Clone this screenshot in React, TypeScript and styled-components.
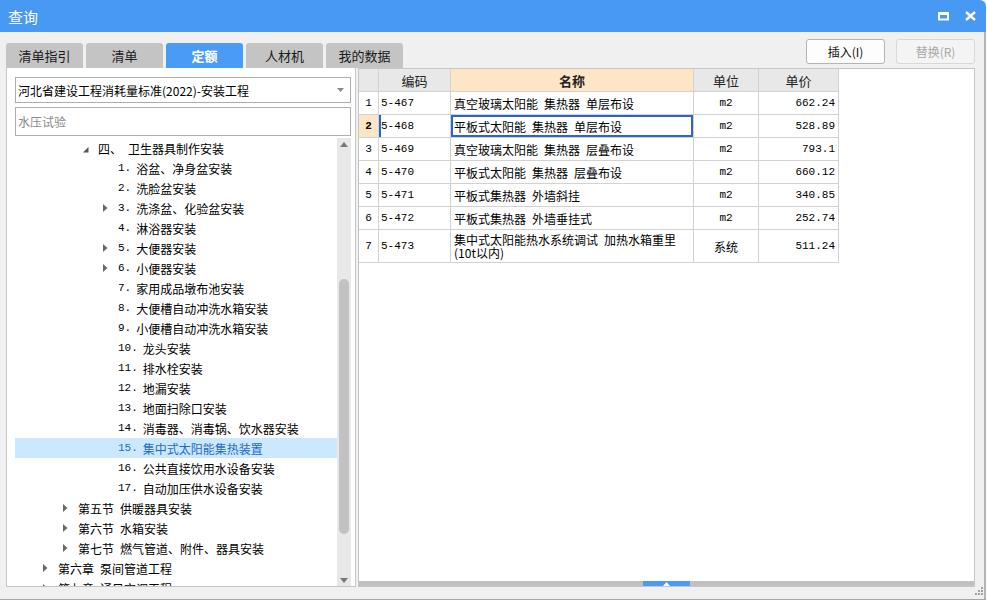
import styled, { createGlobalStyle } from "styled-components";

const GlobalStyle = createGlobalStyle`
  html, body {
    margin: 0;
    padding: 0;
    background: #fff;
  }
  body {
    font-family: "Noto Sans CJK SC", "Noto Sans", sans-serif;
    font-size: 12px;
    color: #000;
  }
  * { box-sizing: border-box; }
`;

const mono = `"Liberation Mono", "DejaVu Sans Mono", monospace`;

const Window = styled.div`
  width: 986px;
  height: 600px;
  display: flex;
  flex-direction: column;
  border-bottom: 1px solid #a6a6a6;
  position: relative;
`;

const TitleBar = styled.div`
  height: 32px;
  flex: none;
  background: #4799f4;
  color: #fff;
  display: flex;
  align-items: center;
  justify-content: space-between;
  padding: 0 10px 0 8px;
  border-top-right-radius: 6px;
  font-size: 15px;
`;

const Controls = styled.div`
  display: flex;
  align-items: center;
  gap: 16px;
`;

const Body = styled.div`
  flex: 1;
  background: #f0f0f0;
  border-right: 2px solid #b4b4b4;
  padding: 0 9px 0 6px;
  display: flex;
  flex-direction: column;
`;

const TopRow = styled.div`
  height: 36px;
  flex: none;
  display: flex;
  justify-content: space-between;
`;

const Tabs = styled.div`
  display: flex;
  gap: 3px;
  align-self: flex-end;
`;

const Tab = styled.div<{ $active?: boolean }>`
  width: 77px;
  height: 25px;
  border-radius: 3px 3px 0 0;
  background: ${(p) => (p.$active ? "#4a9bf4" : "#c4c4c4")};
  color: ${(p) => (p.$active ? "#fff" : "#1a1a1a")};
  font-weight: ${(p) => (p.$active ? "bold" : "normal")};
  font-size: 13px;
  display: flex;
  align-items: center;
  justify-content: center;
`;

const Buttons = styled.div`
  display: flex;
  gap: 11px;
  margin-top: 7px;
`;

const Button = styled.div<{ $disabled?: boolean }>`
  width: 79px;
  height: 25px;
  border: 1px solid ${(p) => (p.$disabled ? "#d8d8d8" : "#b4b4b4")};
  border-radius: 3px;
  background: ${(p) => (p.$disabled ? "#f4f4f4" : "#fdfdfd")};
  color: ${(p) => (p.$disabled ? "#a8a8a8" : "#111")};
  display: flex;
  align-items: center;
  justify-content: center;
`;

const Content = styled.div`
  height: 519px;
  flex: none;
  display: flex;
  gap: 2px;
`;

const LeftPanel = styled.div`
  width: 350px;
  flex: none;
  background: #fff;
  border: 1px solid #c6c6c6;
  border-top: none;
  padding: 9px 4px 0 8px;
  display: flex;
  flex-direction: column;
`;

const Select = styled.div`
  height: 26px;
  flex: none;
  border: 1px solid #adadad;
  display: flex;
  align-items: center;
  justify-content: space-between;
  padding: 0 6px 0 2px;
  white-space: nowrap;
`;

const SearchInput = styled.input`
  height: 29px;
  flex: none;
  margin-top: 4px;
  border: 1px solid #adadad;
  padding: 0 2px;
  font-family: "Noto Sans CJK SC", "Noto Sans", sans-serif;
  font-size: 12px;
  outline: none;
  &::placeholder {
    color: #8a8a8a;
  }
`;

const Tree = styled.div`
  flex: 1;
  margin-top: 2px;
  display: flex;
  overflow: hidden;
`;

const TreeRows = styled.div`
  flex: 1;
  overflow: hidden;
`;

const TreeRow = styled.div<{ $level: number; $selected?: boolean }>`
  height: 20px;
  display: flex;
  align-items: center;
  padding-left: ${(p) => 28 + p.$level * 20}px;
  background: ${(p) => (p.$selected ? "#cce8ff" : "transparent")};
  color: ${(p) => (p.$selected ? "#1c6cc6" : "#000")};
  white-space: nowrap;
`;

const Toggle = styled.span`
  width: 15px;
  flex: none;
  display: flex;
  align-items: center;
`;

const Num = styled.span`
  font-family: ${mono};
  font-size: 11px;
  margin-right: 5px;
`;

const Lead = styled.span`
  margin-right: 6px;
`;

const VScroll = styled.div`
  width: 14px;
  flex: none;
  background: #e8e8e8;
  display: flex;
  flex-direction: column;
  align-items: center;
  justify-content: space-between;
  padding: 4px 0 3px;
  position: relative;
`;

const VThumb = styled.div`
  position: absolute;
  left: 2px;
  top: 141px;
  width: 10px;
  height: 255px;
  border-radius: 5px;
  background: #c2c2c2;
`;

const GridPanel = styled.div`
  flex: 1;
  background: #fff;
  border: 1px solid #c6c6c6;
  display: flex;
  flex-direction: column;
  justify-content: space-between;
`;

const Table = styled.div`
  display: grid;
  grid-template-columns: 20px 72px 243px 65px 80px;
  width: 480px;
`;

const Cell = styled.div<{
  $align?: "left" | "center" | "right";
  $bg?: string;
  $mono?: boolean;
  $bold?: boolean;
  $tall?: boolean;
}>`
  height: ${(p) => (p.$tall ? 33 : 23)}px;
  border-right: 1px solid #d2d2d2;
  border-bottom: 1px solid #d2d2d2;
  background: ${(p) => p.$bg || "#fff"};
  display: flex;
  align-items: center;
  justify-content: ${(p) =>
    p.$align === "center" ? "center" : p.$align === "right" ? "flex-end" : "flex-start"};
  padding: 0 3px;
  font-family: ${(p) => (p.$mono ? mono : `"Noto Sans CJK SC", "Noto Sans", sans-serif`)};
  font-size: ${(p) => (p.$mono ? 11 : 12)}px;
  font-weight: ${(p) => (p.$bold ? "bold" : "normal")};
  white-space: nowrap;
`;

const HeadCell = styled(Cell)`
  background: ${(p) => p.$bg || "#e8e8e8"};
  color: #222;
  font-size: 13px;
`;

const CodeCell = styled(Cell)<{ $marked?: boolean }>`
  padding-left: 2px;
  box-shadow: ${(p) => (p.$marked ? "inset 2px 0 0 #2468c8" : "none")};
`;

const NameCell = styled(Cell)<{ $current?: boolean }>`
  box-shadow: ${(p) => (p.$current ? "inset 0 0 0 2px #2a66c8" : "none")};
`;

const NameText = styled.div`
  white-space: normal;
  line-height: 13px;
`;

const HBar = styled.div`
  height: 5px;
  background: #c0c0c0;
  position: relative;
`;

const HThumb = styled.div`
  position: absolute;
  left: 284px;
  top: 0;
  width: 47px;
  height: 5px;
  background: #4a9bf4;
  display: flex;
  justify-content: center;
  align-items: center;
`;

const Grip = styled.svg`
  position: absolute;
  right: 3px;
  bottom: 4px;
`;

type Node = {
  level: number;
  toggle?: "open" | "closed";
  num?: string;
  lead?: string;
  text: string;
  selected?: boolean;
};

const tree: Node[] = [
  { level: 2, toggle: "open", lead: "四、", text: "卫生器具制作安装" },
  { level: 3, num: "1.", text: "浴盆、净身盆安装" },
  { level: 3, num: "2.", text: "洗脸盆安装" },
  { level: 3, toggle: "closed", num: "3.", text: "洗涤盆、化验盆安装" },
  { level: 3, num: "4.", text: "淋浴器安装" },
  { level: 3, toggle: "closed", num: "5.", text: "大便器安装" },
  { level: 3, toggle: "closed", num: "6.", text: "小便器安装" },
  { level: 3, num: "7.", text: "家用成品墩布池安装" },
  { level: 3, num: "8.", text: "大便槽自动冲洗水箱安装" },
  { level: 3, num: "9.", text: "小便槽自动冲洗水箱安装" },
  { level: 3, num: "10.", text: "龙头安装" },
  { level: 3, num: "11.", text: "排水栓安装" },
  { level: 3, num: "12.", text: "地漏安装" },
  { level: 3, num: "13.", text: "地面扫除口安装" },
  { level: 3, num: "14.", text: "消毒器、消毒锅、饮水器安装" },
  { level: 3, num: "15.", text: "集中式太阳能集热装置", selected: true },
  { level: 3, num: "16.", text: "公共直接饮用水设备安装" },
  { level: 3, num: "17.", text: "自动加压供水设备安装" },
  { level: 1, toggle: "closed", lead: "第五节", text: "供暖器具安装" },
  { level: 1, toggle: "closed", lead: "第六节", text: "水箱安装" },
  { level: 1, toggle: "closed", lead: "第七节", text: "燃气管道、附件、器具安装" },
  { level: 0, toggle: "closed", lead: "第六章", text: "泵间管道工程" },
  { level: 0, toggle: "closed", lead: "第七章", text: "通风空调工程" },
];

// en spaces (\u2002) stand in for the half-width gaps of the original font
const rows = [
  { n: "1", code: "5-467", name: "真空玻璃太阳能\u2002集热器\u2002单层布设", unit: "m2", price: "662.24" },
  { n: "2", code: "5-468", name: "平板式太阳能\u2002集热器\u2002单层布设", unit: "m2", price: "528.89", current: true },
  { n: "3", code: "5-469", name: "真空玻璃太阳能\u2002集热器\u2002层叠布设", unit: "m2", price: "793.1" },
  { n: "4", code: "5-470", name: "平板式太阳能\u2002集热器\u2002层叠布设", unit: "m2", price: "660.12" },
  { n: "5", code: "5-471", name: "平板式集热器\u2002外墙斜挂", unit: "m2", price: "340.85" },
  { n: "6", code: "5-472", name: "平板式集热器\u2002外墙垂挂式", unit: "m2", price: "252.74" },
];

const Arrow = ({ kind }: { kind: "open" | "closed" }) =>
  kind === "open" ? (
    <svg width="6" height="6" style={{ marginTop: 4 }}>
      <polygon points="5.5,0 5.5,5.5 0,5.5" fill="#555" />
    </svg>
  ) : (
    <svg width="5" height="8">
      <polygon points="0,0 4.5,4 0,8" fill="#6a6a6a" />
    </svg>
  );

const App = () => {
  return (
    <>
      <GlobalStyle />
      <Window>
        <TitleBar>
          <span>查询</span>
          <Controls>
            <svg width="11" height="9">
              <rect x="1" y="1.5" width="9" height="6" fill="none" stroke="#fff" strokeWidth="2" />
              <rect x="0" y="0" width="11" height="3" fill="#fff" />
            </svg>
            <svg width="11" height="10">
              <path d="M1 1 L10 9 M10 1 L1 9" stroke="#fff" strokeWidth="2.4" />
            </svg>
          </Controls>
        </TitleBar>
        <Body>
          <TopRow>
            <Tabs>
              <Tab>清单指引</Tab>
              <Tab>清单</Tab>
              <Tab $active>定额</Tab>
              <Tab>人材机</Tab>
              <Tab>我的数据</Tab>
            </Tabs>
            <Buttons>
              <Button>插入(I)</Button>
              <Button $disabled>替换(R)</Button>
            </Buttons>
          </TopRow>
          <Content>
            <LeftPanel>
              <Select>
                <span>河北省建设工程消耗量标准(2022)-安装工程</span>
                <svg width="7" height="4">
                  <polygon points="0,0 7,0 3.5,4" fill="#888" />
                </svg>
              </Select>
              <SearchInput placeholder="水压试验" />
              <Tree>
                <TreeRows>
                  {tree.map((node, i) => (
                    <TreeRow key={i} $level={node.level} $selected={node.selected}>
                      <Toggle>{node.toggle && <Arrow kind={node.toggle} />}</Toggle>
                      {node.num && <Num>{node.num}</Num>}
                      {node.lead && <Lead>{node.lead}</Lead>}
                      <span>{node.text}</span>
                    </TreeRow>
                  ))}
                </TreeRows>
                <VScroll>
                  <svg width="8" height="5">
                    <polygon points="0,5 8,5 4,0" fill="#787878" />
                  </svg>
                  <VThumb />
                  <svg width="8" height="5">
                    <polygon points="0,0 8,0 4,5" fill="#787878" />
                  </svg>
                </VScroll>
              </Tree>
            </LeftPanel>
            <GridPanel>
              <Table>
                <HeadCell />
                <HeadCell $align="center">编码</HeadCell>
                <HeadCell $align="center" $bg="#fde6c6" $bold>
                  名称
                </HeadCell>
                <HeadCell $align="center">单位</HeadCell>
                <HeadCell $align="center">单价</HeadCell>
                {rows.map((r) => [
                  <Cell
                    key={r.n + "n"}
                    $align="center"
                    $mono
                    $bold={r.current}
                    $bg={r.current ? "#fde6c6" : undefined}
                  >
                    {r.n}
                  </Cell>,
                  <CodeCell key={r.n + "c"} $mono $marked={r.current}>
                    {r.code}
                  </CodeCell>,
                  <NameCell key={r.n + "m"} $current={r.current}>
                    {r.name}
                  </NameCell>,
                  <Cell key={r.n + "u"} $align="center" $mono>
                    {r.unit}
                  </Cell>,
                  <Cell key={r.n + "p"} $align="right" $mono>
                    {r.price}
                  </Cell>,
                ])}
                <Cell $align="center" $mono $tall>
                  7
                </Cell>
                <CodeCell $mono $tall>
                  5-473
                </CodeCell>
                <NameCell $tall>
                  <NameText>
                    集中式太阳能热水系统调试{"\u2002"}加热水箱重里
                    <br />
                    (10t以内)
                  </NameText>
                </NameCell>
                <Cell $align="center" $tall>
                  系统
                </Cell>
                <Cell $align="right" $mono $tall>
                  511.24
                </Cell>
              </Table>
              <HBar>
                <HThumb>
                  <svg width="7" height="4">
                    <polygon points="0,4 7,4 3.5,0" fill="#fff" />
                  </svg>
                </HThumb>
              </HBar>
            </GridPanel>
          </Content>
        </Body>
        <Grip width="8" height="8">
          <rect x="6" y="0" width="2" height="2" fill="#a0a0a0" />
          <rect x="3" y="3" width="2" height="2" fill="#a0a0a0" />
          <rect x="6" y="3" width="2" height="2" fill="#a0a0a0" />
          <rect x="0" y="6" width="2" height="2" fill="#a0a0a0" />
          <rect x="3" y="6" width="2" height="2" fill="#a0a0a0" />
          <rect x="6" y="6" width="2" height="2" fill="#a0a0a0" />
        </Grip>
      </Window>
    </>
  );
};

export default App;
